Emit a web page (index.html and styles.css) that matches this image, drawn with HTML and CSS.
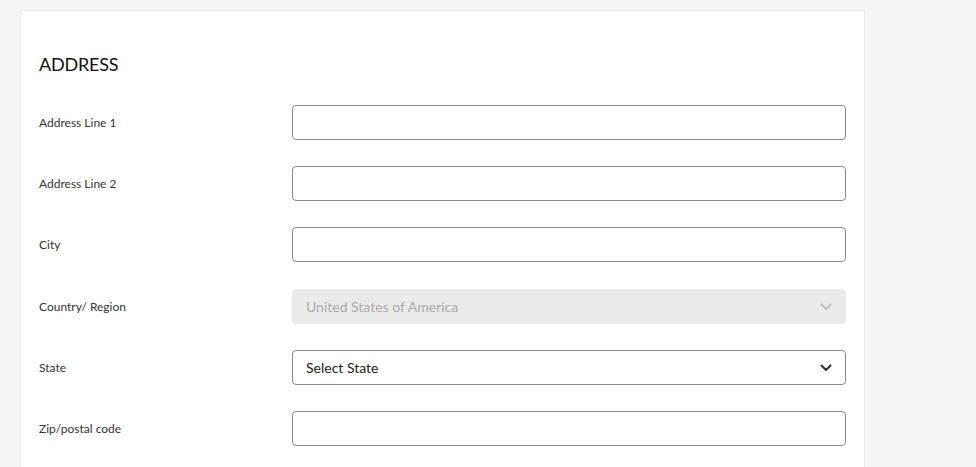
FILE: index.html
```
<!DOCTYPE html>
<html lang="en">
<head>
<meta charset="utf-8">
<title>Address</title>
<link rel="stylesheet" href="styles.css">
</head>
<body>
<section class="card">
  <h2 class="heading">ADDRESS</h2>
  <div class="form">
    <label class="label" for="a1">Address Line 1</label>
    <input class="field" id="a1" type="text">
    <label class="label" for="a2">Address Line 2</label>
    <input class="field" id="a2" type="text">
    <label class="label" for="city">City</label>
    <input class="field" id="city" type="text">
    <span class="label">Country/ Region</span>
    <div class="select disabled">
      <span class="select-text">United States of America</span>
      <svg class="chev" width="12" height="8" viewBox="0 0 12 8"><path d="M1.5 1.5 L6 6 L10.5 1.5" fill="none" stroke="currentColor" stroke-width="1.8" stroke-linecap="round" stroke-linejoin="round"/></svg>
    </div>
    <span class="label">State</span>
    <div class="select">
      <span class="select-text">Select State</span>
      <svg class="chev" width="12" height="8" viewBox="0 0 12 8"><path d="M1.5 1.5 L6 6 L10.5 1.5" fill="none" stroke="currentColor" stroke-width="2.1" stroke-linecap="round" stroke-linejoin="round"/></svg>
    </div>
    <label class="label" for="zip">Zip/postal code</label>
    <input class="field" id="zip" type="text">
  </div>
</section>
</body>
</html>
```
FILE: styles.css
```
* { box-sizing: border-box; }
html, body { margin: 0; height: 100%; }
body {
  background: #f5f5f5;
  padding: 10px 0 0 20px;
  font-family: Lato, "Open Sans", "Liberation Sans", sans-serif;
  overflow: hidden;
}
.card {
  width: 845px;
  min-height: 500px;
  background: #fff;
  border: 1px solid #ebebeb;
  padding: 41px 18px 0 18px;
}
.heading {
  margin: 0 0 29px 0;
  font-size: 18px;
  line-height: 24px;
  font-weight: 400;
  color: #111;
  letter-spacing: -0.2px;
}
.form {
  display: grid;
  grid-template-columns: 253px 554px;
  grid-auto-rows: 35px;
  row-gap: 26.2px;
  align-items: center;
}
.label {
  font-size: 12px;
  color: #333;
}
.field {
  width: 100%;
  height: 35px;
  border: 1px solid #8a8a8a;
  border-radius: 4px;
  background: #fff;
  margin: 0;
  padding: 0 13px;
  font: inherit;
}
.select {
  height: 35px;
  border: 1px solid #8a8a8a;
  border-radius: 4px;
  display: flex;
  align-items: center;
  justify-content: space-between;
  padding: 0 13px 0 13px;
  color: #222;
  font-size: 14px;
}
.select .chev { color: #333; margin-top: 1px; }
.select.disabled {
  background: #eaeaea;
  border-color: #eaeaea;
  color: #aaa;
}
.select.disabled .chev { color: #bdbdbd; }
```
